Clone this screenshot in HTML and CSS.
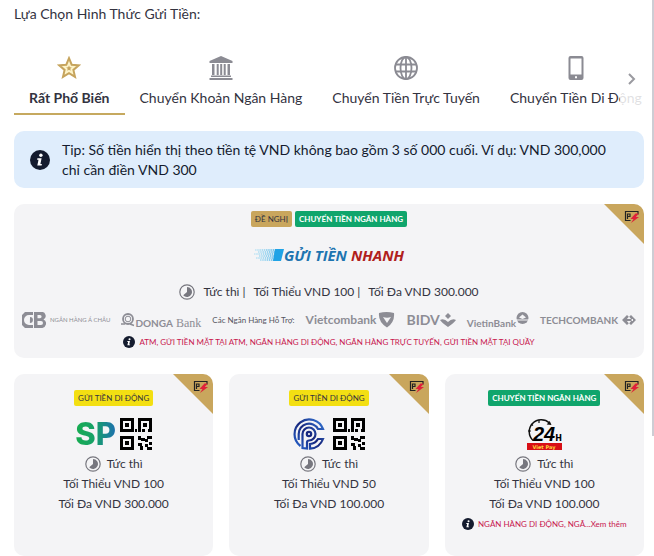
FILE: index.html
```
<!DOCTYPE html>
<html lang="vi">
<head>
    <meta charset="UTF-8">
    <meta name="viewport" content="width=device-width, initial-scale=1.0">
    <title>Gửi Tiền</title>
    <link rel="stylesheet" href="styles.css">
</head>
<body>

    <!-- shared symbols -->
    <svg class="sprite" aria-hidden="true">
        <symbol id="clock" viewBox="0 0 16 16">
            <circle cx="8" cy="8" r="7.2" fill="none" stroke="#77777f" stroke-width="1.2"/>
            <path d="M8 3a5 5 0 1 1-3.8 8.300L8 8z" fill="#77777f"/>
        </symbol>
        <symbol id="info" viewBox="0 0 20 20">
            <circle cx="10" cy="10" r="10" fill="#141b2e"/>
            <circle cx="10.900" cy="5.300" r="1.700" fill="#fff"/>
            <path d="M7.400 8.300h4.200L10.400 14h1.500l-.3 1.500H7.300L8.500 9.800H7.100z" fill="#fff"/>
        </symbol>
        <symbol id="express" viewBox="0 0 40 40">
            <path d="M0 0h40v40z" fill="#c9a65d"/>
            <path d="M21.500 17v-9.500h12.500v3M21.500 16.500h5" fill="none" stroke="#222" stroke-width="1.200"/>
            <path d="M23.500 15v-5h2.500v2.500h-2.500" fill="none" stroke="#222" stroke-width="1.200"/>
            <path d="M31.500 9.500l-5 5.500h3l-2.500 4 8-6h-3.200l3-3.500z" fill="#e0203a"/>
        </symbol>
        <symbol id="qr" viewBox="0 0 32 32">
            <path d="M0 0h14v14H0zM3 3v8h8V3zM5 5h4v4H5zM18 0h14v14h-4v-3h1V3h-8v11h-3zM23 5h4v4h-4zM0 18h14v14H0zM3 21v8h8v-8zM5 23h4v4H5z" fill-rule="evenodd"/>
            <path d="M15 11h2v3h-2zM22 11h3v3h-3zM18 18h3v4h-3zM21 20h4v3h-4zM27 18h5v3h-5zM25 21h3v3h-3zM18 25h4v3h-4zM20 28h3v4h-3zM29 24h3v3h-3zM25 26h3v3h-3zM27 29h5v3h-5z"/>
        </symbol>
    </svg>

    <main class="deposit">
        <h1>Lựa Chọn Hình Thức Gửi Tiền:</h1>

        <nav class="tabs">
            <a href="#popular" class="tab active">
                <svg class="tab-icon" viewBox="0 0 24 24">
                    <path d="M12 2.200l2.700 6.500 7 .6-5.300 4.600 1.600 6.900-6-3.700-6 3.700 1.600-6.900-5.300-4.600 7-.6z" fill="#fdf3c8" stroke="#c6a45d" stroke-width="2"/>
                    <path d="M12 9.500l.8 1.800 2 .2-1.500 1.300.4 2-1.700-1-1.700 1 .4-2-1.500-1.300 2-.2z" fill="#c6a45d"/>
                </svg>
                Rất Phổ Biến
            </a>
            <a href="#bank" class="tab">
                <svg class="tab-icon" viewBox="0 0 24 24" fill="#8b8b93">
                    <path d="M12 0l11.500 5v2H.5V5zM3 8h2.500v11H3zM7.700 8h2v11h-2zM11.200 8h2v11h-2zM14.700 8h2v11h-2zM18.500 8H21v11h-2.500zM2 19.500h20V21H2zM.5 22h23v2H.5z"/>
                </svg>
                Chuyển Khoản Ngân Hàng
            </a>
            <a href="#online" class="tab">
                <svg class="tab-icon" viewBox="0 0 24 24" fill="none" stroke="#8b8b93" stroke-width="1.800">
                    <circle cx="12" cy="12" r="11"/>
                    <ellipse cx="12" cy="12" rx="5.500" ry="11"/>
                    <path d="M12 1v22M1.500 8.500h21M1.500 15.500h21"/>
                </svg>
                Chuyển Tiền Trực Tuyến
            </a>
            <a href="#mobile" class="tab">
                <svg class="tab-icon" viewBox="0 0 24 24">
                    <path d="M6.500 0h11A2 2 0 0 1 19.500 2v20a2 2 0 0 1-2 2h-11a2 2 0 0 1-2-2V2a2 2 0 0 1 2-2zM6.500 2.500v16h11v-16zM11 20.200v2h2v-2z" fill="#8b8b93" fill-rule="evenodd"/>
                </svg>
                Chuyển Tiền Di Động
            </a>
            <button type="button" class="next" aria-label="Tiếp">
                <svg viewBox="0 0 8 14"><path d="M1 2l5 5-5 5" fill="none" stroke="#9a9aa0" stroke-width="2"/></svg>
            </button>
        </nav>

        <div class="tip">
            <svg class="tip-icon"><use href="#info"/></svg>
            <p>Tip: Số tiền hiển thị theo tiền tệ VND không bao gồm 3 số 000 cuối. Ví dụ: VND 300,000 chỉ cần điền VND 300</p>
        </div>

        <section class="card featured">
            <svg class="corner"><use href="#express"/></svg>
            <div class="badges">
                <span class="badge gold">ĐỀ NGHỊ</span>
                <span class="badge green">CHUYỂN TIỀN NGÂN HÀNG</span>
            </div>
            <div class="fast-logo">
                <svg class="speed" viewBox="0 0 30 12">
                    <defs>
                        <linearGradient id="fade" gradientUnits="userSpaceOnUse" x1="0" x2="28" y1="0" y2="0"><stop offset="0" stop-color="#5bc4f0" stop-opacity=".3"/><stop offset="1" stop-color="#149be0"/></linearGradient>
                    </defs>
                    <path d="M1 1h28M4 3h25M0 5h28M5 7h23M2 9h25M6 11h21" stroke="url(#fade)" stroke-width="1.400" stroke-dasharray="1.500 .7"/>
                    <path d="M21 0h9l-3 12h-8z" fill="#20a3e6"/>
                </svg>
                <span class="fast-blue">GỬI TIỀN</span>
                <span class="fast-red">NHANH</span>
            </div>
            <p class="limits">
                <svg class="clock"><use href="#clock"/></svg>
                <span>Tức thì |</span>
                <span>Tối Thiểu VND 100 |</span>
                <span>Tối Đa VND 300.000</span>
            </p>
            <div class="banks">
                <span class="bank">
                    <svg class="cb" viewBox="0 0 24 16">
                        <path d="M3 0h8v3H7a5 5 0 0 0 0 10h4v3H3L0 13V3zM8 5a3 3 0 1 1-.1 6z" fill="#8d8d95"/>
                        <path d="M12 0h7a4 4 0 0 1 2.500 7.500A4.500 4.500 0 0 1 19 16h-7zM15.500 3v3.200H18A1.600 1.600 0 0 0 18 3zM15.500 9v4H19a2 2 0 0 0 0-4z" fill="#8d8d95" fill-rule="evenodd"/>
                    </svg>
                    <span class="acb">NGÂN HÀNG Á CHÂU</span>
                </span>
                <span class="bank">
                    <svg class="ring" viewBox="0 0 14 14" fill="none" stroke="#8d8d95"><circle cx="7" cy="6" r="5" stroke-width="1.800"/><circle cx="7" cy="6" r="2.800"/><path d="M0 11h4M9 11l4 1.500" stroke-width="1.500"/></svg>
                    <span class="low"><span class="donga">DONGA</span> <span class="serif">Bank</span></span>
                </span>
                <span class="support">Các Ngân Hàng Hỗ Trợ:</span>
                <span class="bank">
                    <span class="vietcom">Vietcombank</span>
                    <svg class="shield" viewBox="0 0 17 16"><path d="M1 1q7.500-2 15 0 1 9-7 14.500Q0 10 1 1zM5 5l4 6 4-6q-4 1.500-8 0z" fill="#8d8d95" fill-rule="evenodd"/></svg>
                </span>
                <span class="bank">
                    <span class="bidv">BIDV</span>
                    <svg class="lotus" viewBox="0 0 16 14" fill="#8d8d95"><path d="M8 0l3 3-3 3-3-3z"/><path d="M0 7q4-2 8 2 4-4 8-2-2 3-8 7-6-4-8-7z"/></svg>
                </span>
                <span class="bank">
                    <span class="low vietin">VietinBank</span>
                    <svg class="globe" viewBox="0 0 13 13"><circle cx="6.500" cy="6" r="6" fill="#8d8d95"/><path d="M3 5.500l3.500-3 3.500 3-3.500 1.500z" fill="#f4f4f6"/><path d="M0 8h13" stroke="#f4f4f6"/></svg>
                </span>
                <span class="bank">
                    <span class="techcom">TECHCOMBANK</span>
                    <svg class="diamonds" viewBox="0 0 14 10"><path d="M0 5l5-5 1.800 1.800L4 5l2.800 3.200L5 10zM14 5L9 0 7.200 1.800 10 5 7.200 8.200 9 10zM3 4h8v2H3z" fill="#8d8d95"/></svg>
                </span>
            </div>
            <p class="note">
                <svg class="note-icon"><use href="#info"/></svg>
                ATM, GỬI TIỀN MẶT TẠI ATM, NGÂN HÀNG DI ĐỘNG, NGÂN HÀNG TRỰC TUYẾN, GỬI TIỀN MẶT TẠI QUẦY
            </p>
        </section>

        <div class="grid">
            <section class="card method">
                <svg class="corner"><use href="#express"/></svg>
                <span class="badge yellow">GỬI TIỀN DI ĐỘNG</span>
                <div class="logo">
                    <span class="sp">SP</span>
                    <svg class="qr"><use href="#qr"/></svg>
                </div>
                <p class="time"><svg class="clock"><use href="#clock"/></svg> Tức thì</p>
                <p>Tối Thiểu VND 100</p>
                <p>Tối Đa VND 300.000</p>
            </section>

            <section class="card method">
                <svg class="corner"><use href="#express"/></svg>
                <span class="badge yellow">GỬI TIỀN DI ĐỘNG</span>
                <div class="logo wide">
                    <svg class="cp" viewBox="0 0 32 32" fill="none" stroke="url(#navy)" stroke-width="2.200">
                        <defs>
                            <linearGradient id="navy" gradientUnits="userSpaceOnUse" x1="32" y1="0" x2="0" y2="32"><stop offset="0" stop-color="#3a86e8"/><stop offset=".5" stop-color="#17267c"/><stop offset="1" stop-color="#2a6fdc"/></linearGradient>
                        </defs>
                        <path d="M7.500 28A14.700 14.700 0 1 1 30 11h-5A10.300 10.300 0 0 0 5.700 16v6"/>
                        <path d="M9.500 30V16a6.500 6.500 0 1 1 6.500 6.500q-2 0-2 2V30.500z"/>
                        <circle cx="16" cy="16" r="2.200"/>
                        <path d="M17 30.700A14.700 14.700 0 0 0 30 21h-5a10.300 10.300 0 0 1-8 5z"/>
                    </svg>
                    <svg class="qr"><use href="#qr"/></svg>
                </div>
                <p class="time"><svg class="clock"><use href="#clock"/></svg> Tức thì</p>
                <p>Tối Thiểu VND 50</p>
                <p>Tối Đa VND 100.000</p>
            </section>

            <section class="card method">
                <svg class="corner"><use href="#express"/></svg>
                <span class="badge green">CHUYỂN TIỀN NGÂN HÀNG</span>
                <div class="logo">
                    <svg class="vietpay" viewBox="0 0 36 32">
                        <path d="M7 22.500A11.500 11.500 0 1 1 23.500 5" fill="none" stroke="#111" stroke-width="1.500"/>
                        <path d="M25.500 7l-4.800-.5 3-3.400z" fill="#111"/>
                        <path d="M13 2v3M2 13h3M5 6l2 1.500" stroke="#111" stroke-width="1.200"/>
                        <text x="7" y="23" class="vp-num">24<tspan class="vp-h">H</tspan></text>
                        <rect x="1" y="25" width="35" height="7" fill="#d80f16"/>
                        <text x="18" y="31" class="vp-name">Viet Pay</text>
                    </svg>
                </div>
                <p class="time"><svg class="clock"><use href="#clock"/></svg> Tức thì</p>
                <p>Tối Thiểu VND 100</p>
                <p>Tối Đa VND 100.000</p>
                <p class="note">
                    <svg class="note-icon"><use href="#info"/></svg>
                    <span>NGÂN HÀNG DI ĐỘNG, NGÂ...<a href="#more">Xem thêm</a></span>
                </p>
            </section>
        </div>
    </main>

    <div class="scrollbar"></div>

</body>
</html>
```
FILE: styles.css
```
body {
    font-family: Lato, "Liberation Serif", serif;
    font-size: 14px;
    line-height: 20px;
    margin: 0;
    color: #33333f;
    background-color: #fff;
}
h1, p {
    margin: 0;
    font-weight: normal;
}
h1 {
    font-size: 14px;
}
a {
    color: inherit;
    text-decoration: none;
}
.sprite {
    position: absolute;
    width: 0;
    height: 0;
}
.deposit {
    padding: 4px 10px 0 14px;
}
.tabs {
    display: flex;
    position: relative;
    margin-top: 32px;
    overflow: hidden;
}
.tab {
    display: flex;
    flex-direction: column;
    align-items: center;
    flex-shrink: 0;
    gap: 8px;
    padding: 0 15px 5px;
    border-bottom: 2px solid transparent;
    white-space: nowrap;
}
.tab.active {
    font-weight: bold;
    border-color: #c6a95f;
}
.tab-icon {
    width: 24px;
    height: 24px;
}
.next {
    position: absolute;
    top: 0;
    right: 0;
    bottom: 0;
    width: 24px;
    padding: 0 0 10px;
    border: none;
    background-color: rgba(255, 255, 255, 0.85);
    cursor: pointer;
}
.next svg {
    width: 8px;
    height: 14px;
}
.tip {
    display: flex;
    align-items: center;
    gap: 12px;
    margin-top: 16px;
    padding: 9px 32px 8px 16px;
    border-radius: 10px;
    background-color: #dfedfc;
    color: #141b2e;
}
.tip-icon {
    flex-shrink: 0;
    width: 20px;
    height: 20px;
}
.card {
    position: relative;
    overflow: hidden;
    border-radius: 10px;
    background-color: #f4f4f6;
    font-size: 12px;
}
.corner {
    position: absolute;
    top: 0;
    right: 0;
    width: 40px;
    height: 40px;
}
.featured {
    display: flex;
    flex-direction: column;
    align-items: center;
    margin-top: 16px;
    padding: 7px 8px 6px;
}
.badges {
    display: flex;
    gap: 3px;
}
.badge {
    padding: 0 4px;
    border-radius: 2px;
    font-size: 8px;
    line-height: 16px;
}
.gold {
    background-color: #c9a65d;
}
.green {
    background-color: #10a56c;
    color: #fff;
    font-weight: bold;
}
.yellow {
    background-color: #f3df12;
}
.fast-logo {
    display: flex;
    align-items: center;
    margin-top: 18px;
    font-family: "Open Sans", sans-serif;
    font-size: 15px;
    font-style: italic;
    font-weight: bold;
}
.speed {
    width: 30px;
    height: 12px;
}
.fast-blue {
    color: #1d74b0;
}
.fast-red {
    margin-left: 4px;
    color: #b0201c;
}
.limits {
    display: flex;
    align-items: center;
    gap: 8px;
    margin-top: 17px;
}
.clock {
    width: 16px;
    height: 16px;
}
.banks {
    display: flex;
    align-items: center;
    justify-content: space-between;
    align-self: stretch;
    height: 20px;
    margin-top: 8px;
    margin-bottom: 2px;
    color: #8d8d95;
    white-space: nowrap;
}
.bank {
    display: flex;
    align-items: center;
}
.low {
    padding-top: 6px;
}
.cb {
    width: 24px;
    height: 16px;
    margin-right: 4px;
}
.acb {
    font-size: 6px;
}
.ring {
    width: 14px;
    height: 14px;
}
.donga {
    font-size: 10px;
    font-weight: bold;
}
.serif {
    font-family: "Liberation Serif", serif;
    font-size: 12px;
}
.support {
    font-size: 8px;
    color: #55555f;
}
.vietcom {
    font-size: 12px;
    font-weight: bold;
}
.shield {
    width: 17px;
    height: 16px;
    margin-left: 2px;
}
.bidv {
    font-size: 14px;
    font-weight: bold;
}
.lotus {
    width: 16px;
    height: 14px;
}
.vietin {
    font-size: 10px;
    font-weight: bold;
}
.globe {
    width: 13px;
    height: 13px;
    margin-bottom: 4px;
}
.techcom {
    font-size: 10px;
    font-weight: bold;
}
.diamonds {
    width: 14px;
    height: 10px;
    margin-left: 4px;
}
.note {
    display: flex;
    align-items: center;
    gap: 4px;
    color: #c8174f;
    font-size: 8px;
    white-space: nowrap;
}
.note-icon {
    flex-shrink: 0;
    width: 12px;
    height: 12px;
}
.grid {
    display: grid;
    grid-template-columns: repeat(3, 1fr);
    gap: 16px;
    margin-top: 16px;
}
.method {
    display: flex;
    flex-direction: column;
    align-items: center;
    padding: 16px 8px 22px;
}
.logo {
    display: flex;
    align-items: center;
    gap: 4px;
    height: 32px;
    margin: 12px 0 4px;
}
.wide {
    gap: 8px;
}
.sp {
    background-image: linear-gradient(90deg, #17ad50, #17a06a 50%, #1d6fb0);
    background-clip: text;
    color: transparent;
    font-family: Inter, sans-serif;
    font-size: 31px;
    font-weight: 800;
    line-height: 32px;
}
.cp, .qr {
    width: 32px;
    height: 32px;
}
.vietpay {
    width: 36px;
    height: 32px;
}
.vp-num {
    font: italic bold 20px "Liberation Sans", sans-serif;
}
.vp-h {
    font: bold 8px "DejaVu Sans", sans-serif;
}
.vp-name {
    fill: #ffd23a;
    font: bold 5px "DejaVu Sans", sans-serif;
    text-anchor: middle;
}
.time {
    display: flex;
    align-items: center;
    gap: 6px;
}
.scrollbar {
    position: fixed;
    top: 0;
    right: 0;
    width: 2px;
    height: 78.5%;
    background-color: #cdcdd4;
}
```
